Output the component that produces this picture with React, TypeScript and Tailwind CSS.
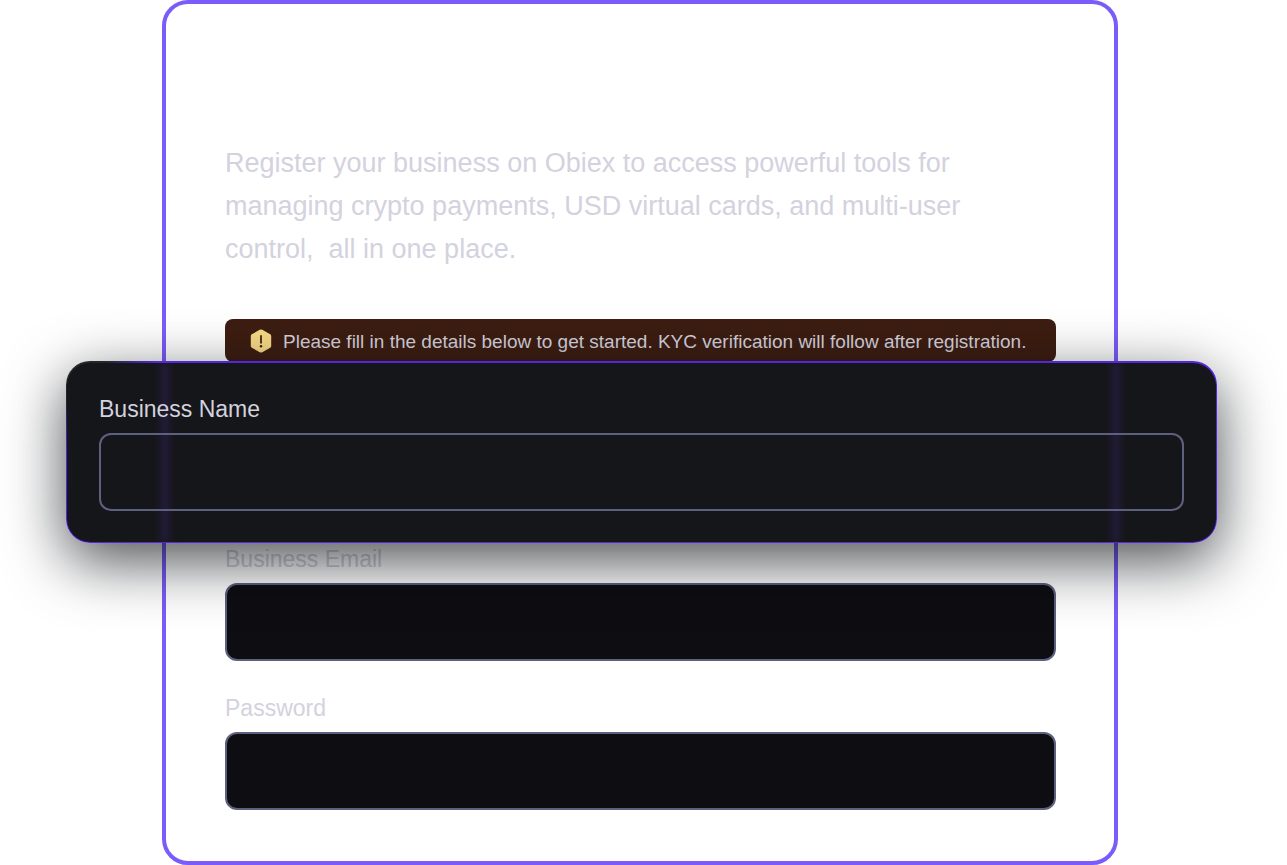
import { useState } from "react";

type FieldProps = {
  id: string;
  label: string;
  type?: string;
  tone?: "solid" | "clear";
};

function Field({ id, label, type = "text", tone = "solid" }: FieldProps) {
  const [value, setValue] = useState("");

  return (
    <div className="flex flex-col gap-2">
      <label className="text-[23px] leading-[31px] text-[#d3d2de]" htmlFor={id}>
        {label}
      </label>
      <input
        className={`h-[78px] w-full rounded-xl border-2 border-[#5e607f] px-6 text-[23px] text-[#d3d2de] outline-none ${
          tone === "clear" ? "bg-transparent" : "bg-[#0e0d12]"
        }`}
        id={id}
        name={id}
        onChange={(event) => setValue(event.target.value)}
        type={type}
        value={value}
      />
    </div>
  );
}

function AlertIcon() {
  return (
    <svg aria-hidden="true" className="h-6 w-[22px] shrink-0" fill="none" viewBox="0 0 22 24">
      <path
        d="M9.7 0.8a2.6 2.6 0 0 1 2.6 0l7.9 4.5A2 2 0 0 1 21.2 7v10a2 2 0 0 1-1 1.7l-7.9 4.5a2.6 2.6 0 0 1-2.6 0l-7.9-4.5A2 2 0 0 1 0.8 17V7a2 2 0 0 1 1-1.7z"
        fill="#f9db87"
      />
      <path d="M11 6.8v7" stroke="#3a1b10" strokeLinecap="round" strokeWidth="1.7" />
      <circle cx="11" cy="17.2" fill="#3a1b10" r="1.2" />
    </svg>
  );
}

export default function App() {
  return (
    <main className="overflow-hidden bg-white pr-[169px] pl-[162px] font-['Liberation_Sans',Arial,sans-serif]">
      <form
        className="rounded-[26px] border-4 border-[#7b5cfa] pt-[138px] pr-[58px] pb-[51px] pl-[59px]"
        onSubmit={(event) => event.preventDefault()}
      >
        <p className="text-[27px] leading-[43px] text-[#d3d2de]">
          Register your business on Obiex to access powerful tools for
          <br />
          managing crypto payments, USD virtual cards, and multi-user
          <br />
          control,&nbsp; all in one place.
        </p>

        <div className="mt-12 flex h-[43px] items-center gap-[11px] rounded-lg bg-[#3d1d11] pl-[25px] text-[19px] text-[#d3d2de]">
          <AlertIcon />
          <p className="pt-0.5 leading-6 whitespace-nowrap">
            Please fill in the details below to get started. KYC verification will follow after registration.
          </p>
        </div>

        {/* Focused field, lifted over the form */}
        <div className="relative z-10 -mt-px -mr-[161px] -ml-[159px] rounded-3xl bg-[linear-gradient(135deg,#25262c_3%,#5626dc_7%)] px-px pt-0.5 pb-px shadow-[0_18px_60px_rgba(4,8,12,0.72)]">
          <div className="relative overflow-hidden rounded-[23px] bg-[#15161a] px-8 py-[31px]">
            <span className="absolute inset-y-0 left-[93px] w-2.5 bg-[#221b36] blur-[3px]" />
            <span className="absolute inset-y-0 right-[95px] w-2.5 bg-[#221b36] blur-[3px]" />
            <div className="relative">
              <Field id="businessName" label="Business Name" tone="clear" />
            </div>
          </div>
        </div>

        <div className="mt-px flex flex-col gap-8">
          <Field id="businessEmail" label="Business Email" type="email" />
          <Field id="password" label="Password" type="password" />
        </div>
      </form>
    </main>
  );
}
